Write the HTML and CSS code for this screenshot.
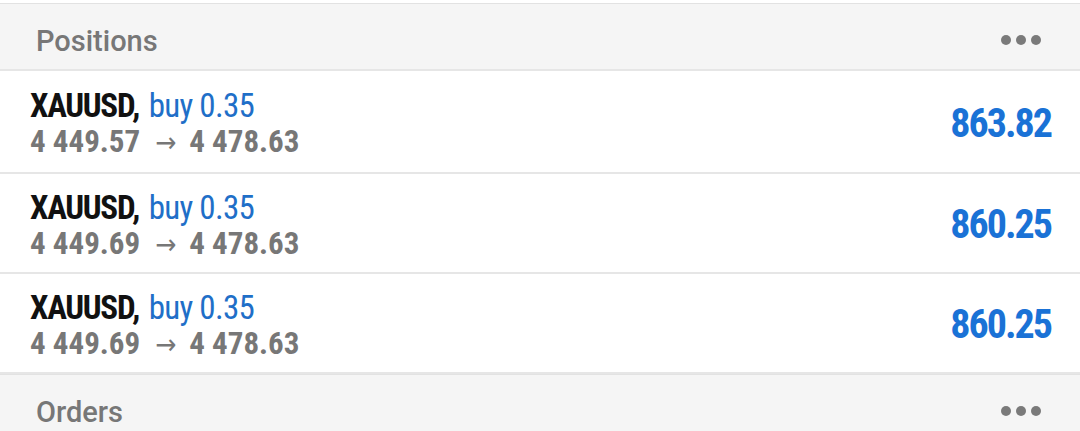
FILE: index.html
```html
<!DOCTYPE html>
<html>
<head>
<meta charset="utf-8">
<link rel="stylesheet" href="styles.css">
</head>
<body>
<div class="page">
  <div class="section-header">
    <span class="section-title">Positions</span>
    <span class="dots"><i></i><i></i><i></i></span>
  </div>
  <div class="row">
    <div class="info">
      <div class="line1"><span class="sym">XAUUSD,</span> <span class="side">buy 0.35</span></div>
      <div class="line2">4 449.57<span class="arrow">→</span>4 478.63</div>
    </div>
    <div class="profit">863.82</div>
  </div>
  <div class="row">
    <div class="info">
      <div class="line1"><span class="sym">XAUUSD,</span> <span class="side">buy 0.35</span></div>
      <div class="line2">4 449.69<span class="arrow">→</span>4 478.63</div>
    </div>
    <div class="profit">860.25</div>
  </div>
  <div class="row">
    <div class="info">
      <div class="line1"><span class="sym">XAUUSD,</span> <span class="side">buy 0.35</span></div>
      <div class="line2">4 449.69<span class="arrow">→</span>4 478.63</div>
    </div>
    <div class="profit">860.25</div>
  </div>
  <div class="section-header">
    <span class="section-title">Orders</span>
    <span class="dots"><i></i><i></i><i></i></span>
  </div>
</div>
</body>
</html>
```

FILE: styles.css
```css
html, body {
  margin: 0;
  padding: 0;
  background: #ffffff;
}
.page {
  padding-top: 3px;
  font-family: "Roboto Condensed", "Liberation Sans Narrow", "DejaVu Sans Condensed", Roboto, sans-serif;
}
.section-header {
  display: flex;
  align-items: center;
  justify-content: space-between;
  height: 65px;
  background: #f5f5f5;
  border-top: 1px solid #e2e2e2;
  border-bottom: 2px solid #e6e6e6;
  padding: 0 39px 0 36px;
}
.section-title {
  font-family: Roboto, "Liberation Sans", sans-serif;
  font-weight: 500;
  font-size: 29px;
  color: #777777;
  padding-top: 8px;
}
.dots {
  display: flex;
  gap: 5px;
  padding-top: 6px;
}
.dots i {
  display: block;
  width: 10px;
  height: 10px;
  border-radius: 50%;
  background: #7a7a7a;
}
.row {
  display: flex;
  align-items: center;
  justify-content: space-between;
  height: 98px;
  border-bottom: 2px solid #e6e6e6;
  padding: 0 29px 0 30px;
}
.section-header + .row {
  height: 101px;
}
.info {
  display: flex;
  flex-direction: column;
  padding-top: 6px;
}
.line1 {
  font-size: 33px;
  line-height: 36px;
  white-space: nowrap;
}
.line2 {
  font-size: 31px;
  line-height: 36px;
  font-weight: 700;
  color: #777777;
  white-space: nowrap;
}
.sym {
  font-weight: 700;
  color: #111111;
  letter-spacing: -1.3px;
  margin-right: 2px;
}
.side {
  color: #1f6fc8;
  letter-spacing: -0.7px;
}
.arrow {
  font-weight: 400;
  font-size: 28px;
  margin: 0 13px 0 15px;
}
.profit {
  font-size: 40px;
  font-weight: 700;
  color: #1a72d6;
  letter-spacing: -2px;
  padding-top: 3px;
}
```
